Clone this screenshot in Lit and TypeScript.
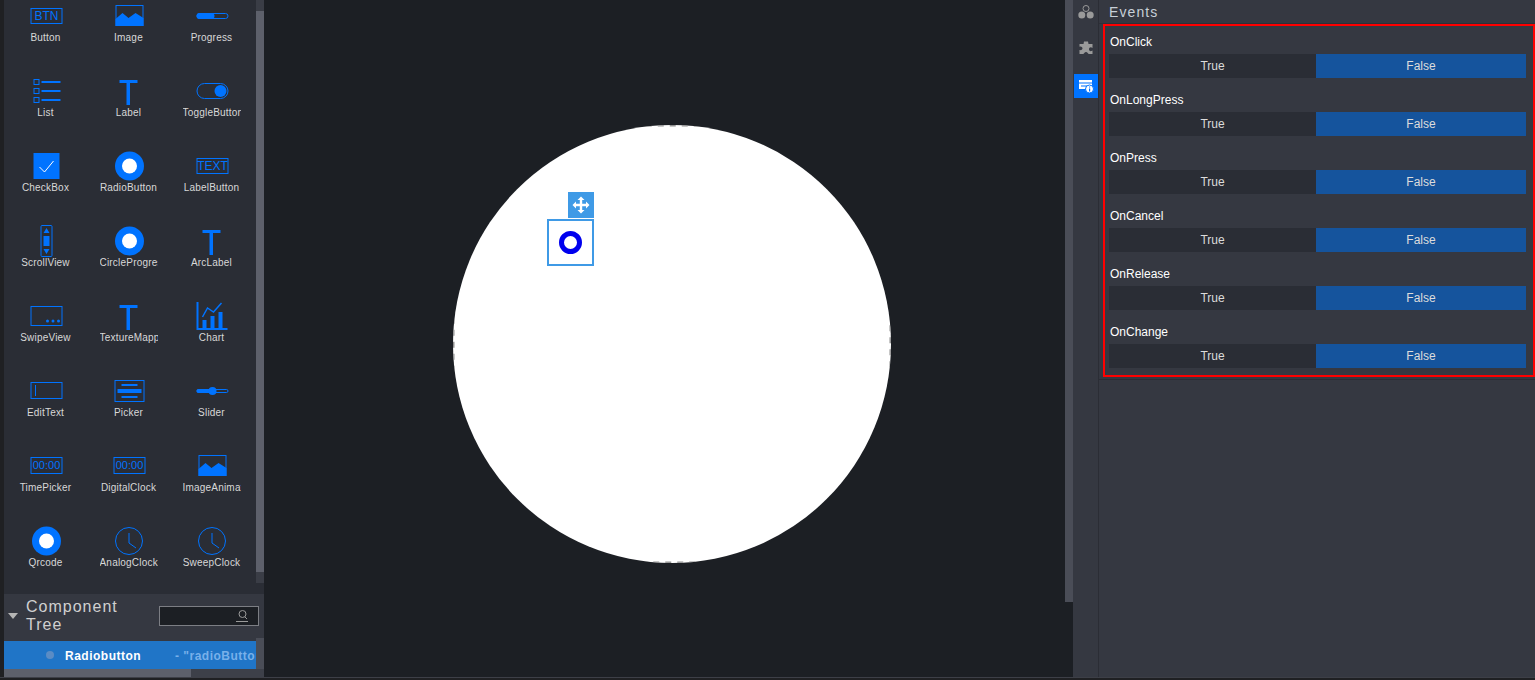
import { LitElement, html, css, svg } from "lit";
import { customElement } from "lit/decorators.js";

const B = "#0073ff";
const T = svg`<path d="M10.5 4h18v3h-7.500v22h-3.500v-22h-7z" fill=${B}/>`;
const dot = svg`<circle cx="20.500" cy="15" r="14.500" fill=${B}/><circle cx="20.500" cy="15" r="7.500" fill="#fff"/>`;
const img = svg`<rect x="7" y="4.500" width="27" height="20" fill="none" stroke=${B}/><path d="M6.500 25v-7l7-6 6 5 7-5 8 5v8z" fill=${B}/>`;
const clock = svg`<circle cx="20" cy="15" r="13.500" fill="none" stroke=${B}/><path d="M20 7v10l7 5" fill="none" stroke=${B}/>`;
const txt = (s: string, rectY: number, h: number, size: number) => svg`<rect x="5" y=${rectY + 0.5} width="31" height=${h} fill="none" stroke=${B}/><text x="20.500" y=${rectY + h / 2 + size * 0.37} text-anchor="middle" font-family="Liberation Sans" font-size=${size} fill=${B}>${s}</text>`;

const items: [string, unknown][] = [
  ["Button", txt("BTN", 7, 15, 12)],
  ["Image", img],
  ["Progress", svg`<rect x="5" y="12.500" width="31" height="5" rx="2.500" fill="none" stroke=${B}/><rect x="4.500" y="12" width="18" height="6" rx="3" fill=${B}/>`],
  ["List", svg`<g fill="none" stroke=${B}><rect x="8" y="3.500" width="5" height="5"/><rect x="8" y="12.500" width="5" height="5"/><rect x="8" y="21.500" width="5" height="5"/></g><path d="M15.500 6h19M15.500 15h19M15.500 24h19" stroke=${B} stroke-width="2"/>`],
  ["Label", T],
  ["ToggleButton", svg`<rect x="5" y="7.500" width="31" height="15" rx="7.500" fill="none" stroke=${B}/><circle cx="28.500" cy="15" r="6" fill=${B}/>`],
  ["CheckBox", svg`<rect x="7.500" y="2" width="26" height="26" fill=${B}/><path d="M13.500 16l5 5 9-11" fill="none" stroke="#fff"/>`],
  ["RadioButton", dot],
  ["LabelButton", txt("TEXT", 7, 15, 12)],
  ["ScrollView", svg`<rect x="15" y="-0.500" width="11" height="31" rx="1" fill="none" stroke=${B}/><path d="M20.500 2l3 5h-6zM17.500 10h6v10h-6zM17.500 23h6l-3 5z" fill=${B}/>`],
  ["CircleProgress", dot],
  ["ArcLabel", T],
  ["SwipeView", svg`<rect x="5" y="5.500" width="31" height="19" fill="none" stroke=${B}/><g fill=${B}><circle cx="21.500" cy="20" r="1.500"/><circle cx="27" cy="20" r="1.500"/><circle cx="32.500" cy="20" r="1.500"/></g>`],
  ["TextureMapper", T],
  ["Chart", svg`<path d="M5.500 1v27h30" fill="none" stroke=${B} stroke-width="2"/><path d="M10.500 19h4v8h-4zM18.500 15h4v12h-4zM26.500 11h4v16h-4z" fill=${B}/><path d="M10.500 16l5-9 6 4 8-9" fill="none" stroke=${B} stroke-width="1.500"/>`],
  ["EditText", svg`<rect x="5" y="6.500" width="31" height="16" fill="none" stroke=${B}/><path d="M9.500 9v11" stroke=${B}/>`],
  ["Picker", svg`<rect x="6" y="4.500" width="29" height="21" fill="none" stroke=${B}/><path d="M12.500 8h16v2h-16zM8.500 13h24v4h-24zM12.500 20h16v2h-16z" fill=${B}/>`],
  ["Slider", svg`<rect x="5" y="13.500" width="31" height="3" rx="1.500" fill="none" stroke=${B}/><rect x="4.500" y="13" width="16" height="4" rx="2" fill=${B}/><circle cx="20.500" cy="15" r="4" fill=${B}/>`],
  ["TimePicker", txt("00:00", 6, 16, 11)],
  ["DigitalClock", txt("00:00", 6, 16, 11)],
  ["ImageAnimator", img],
  ["Qrcode", dot],
  ["AnalogClock", clock],
  ["SweepClock", clock],
];

const events = ["OnClick", "OnLongPress", "OnPress", "OnCancel", "OnRelease", "OnChange"];

@customElement("app-root")
export class AppRoot extends LitElement {
  static styles = css`
    :host { display: block; width: 1535px; height: 680px; overflow: hidden; background: #1c1f24; font-family: "Liberation Sans", Arial, sans-serif; }
    .app { display: grid; grid-template-columns: 4px 260px 5px 804px 26px 436px; height: 677px; }
    .strip { background: #1f2023; }
    .spacer { background: #1c1f24; }
    .left { display: flex; flex-direction: column; min-height: 0; }
    .palette { display: flex; height: 594px; background: #2a2d35; overflow: hidden; }
    .grid { width: 252px; display: grid; grid-template-columns: repeat(3, 83px); grid-auto-rows: 75px; padding-top: 1px; align-content: start; }
    .cell { display: flex; flex-direction: column; align-items: center; }
    .cell svg { width: 40px; height: 30px; overflow: visible; display: block; }
    .name { width: 58px; height: 14px; line-height: 14px; font-size: 10px; letter-spacing: 0.2px; color: #d8d8d8; white-space: nowrap; overflow: hidden; text-align: center; }
    .vbar { width: 8px; height: 583px; background: #3a3d46; padding-top: 11px; box-sizing: border-box; }
    .vbar div { height: 561px; background: #5d606b; }
    .treehead { height: 44px; background: #353841; display: flex; align-items: center; padding-left: 4px; gap: 8px; padding-right: 5px; }
    .tri { width: 0; height: 0; border-left: 5px solid transparent; border-right: 5px solid transparent; border-top: 6px solid #b5b5b5; }
    .title { width: 110px; font-size: 16px; line-height: 18px; letter-spacing: 1px; color: #d0d0d0; }
    .search { width: 100px; height: 20px; box-sizing: border-box; border: 1px solid #7c7e84; background: #1c1f24; display: flex; justify-content: flex-end; align-items: center; padding-right: 9px; margin-left: auto; }
    .gap { height: 3px; background: #353841; }
    .tree { display: grid; grid-template-columns: 252px 8px; grid-template-rows: 28px 8px; }
    .row { background: #2075c7; display: flex; align-items: center; overflow: hidden; white-space: nowrap; font-size: 12px; font-weight: bold; letter-spacing: 0.5px; padding-left: 42px; }
    .bullet { width: 8px; height: 8px; border-radius: 50%; background: #5b8cc4; margin-right: 11px; flex: none; }
    .rname { color: #fff; width: 110px; flex: none; padding-top: 1px; }
    .rid { color: #78b0ea; padding-top: 1px; }
    .tv { background: #4a4d57; margin-top: -3px; }
    .hbar { background: #3d4049; }
    .hbar div { width: 187px; height: 8px; background: #5d606b; }
    .canvas { display: flex; min-width: 0; }
    .stage { flex: 1; position: relative; background: #1c1f24; overflow: hidden; }
    .sbar { width: 8px; height: 602px; background: #4a4d57; }
    .circle { position: absolute; left: 184px; top: 125px; width: 438px; height: 438px; border-radius: 50%; background: #fff; overflow: hidden; }
    .dash { display: block; width: 100%; height: 100%; }
    .sel { position: absolute; left: 278px; top: 219px; width: 47px; height: 47px; box-sizing: border-box; border: 2px solid #3f9ae6; display: flex; align-items: center; justify-content: center; }
    .radio { width: 23px; height: 23px; box-sizing: border-box; border-radius: 50%; border: 5.5px solid #0000ee; background: #fff; }
    .handle { position: absolute; left: 299px; top: 192px; width: 26px; height: 26px; background: #3f9ae6; display: flex; align-items: center; justify-content: center; }
    .rail { background: #353841; border-right: 1px solid #2b2d35; display: flex; flex-direction: column; align-items: center; }
    .ri { width: 24px; height: 24px; display: flex; align-items: center; justify-content: center; margin-bottom: 12px; }
    .ri.two { margin-bottom: 14px; }
    .ri.on { background: #0073ff; }
    .right { background: #353841; display: flex; flex-direction: column; }
    .rhead { height: 24px; box-sizing: border-box; line-height: 24px; padding-left: 10px; font-size: 14px; letter-spacing: 1.1px; color: #c8d0d8; border-bottom: 1px solid #2e3038; }
    .box { margin-left: 4px; height: 353px; box-sizing: border-box; border: 2px solid #f00; padding: 4px 7px 0 4px; }
    .ev { height: 58px; box-sizing: border-box; }
    .evname { height: 24px; line-height: 24px; padding-left: 1px; font-size: 12px; color: #fff; }
    .btns { display: grid; grid-template-columns: 207px 210px; height: 24px; line-height: 24px; font-size: 12px; text-align: center; color: #dcdcdc; }
    .t { background: #2a2d35; }
    .f { background: #15549d; }
    .rline { height: 1px; background: #2b2d35; margin-top: 2px; }
    .foot { height: 3px; background: #1f2023; border-top: 1px solid #3d3f47; box-sizing: border-box; }
  `;

  render() {
    return html`
      <div class="app">
        <div class="strip"></div>
        <div class="left">
          <div class="palette">
            <div class="grid">
              ${items.map(([n, icon]) => html`<div class="cell"><svg viewBox="0 0 40 30">${icon}</svg><div class="name">${n}</div></div>`)}
            </div>
            <div class="vbar"><div></div></div>
          </div>
          <div class="treehead">
            <div class="tri"></div>
            <div class="title">Component Tree</div>
            <div class="search">
              <svg width="14" height="14" viewBox="0 0 14 14" fill="none" stroke="#9a9a9a"><circle cx="7.500" cy="5" r="3.500"/><path d="M10 8l2 2M1 12.500h12"/></svg>
            </div>
          </div>
          <div class="gap"></div>
          <div class="tree">
            <div class="row"><span class="bullet"></span><span class="rname">Radiobutton</span><span class="rid">- "radioButton"</span></div>
            <div class="tv"></div>
            <div class="hbar"><div></div></div>
            <div class="hbar"></div>
          </div>
        </div>
        <div class="spacer"></div>
        <div class="canvas">
          <div class="stage">
            <div class="circle">
              <svg class="dash" viewBox="0 0 438 438"><rect x="0.750" y="0.750" width="436.500" height="436.500" fill="none" stroke="#8f8f8f" stroke-width="1.500" stroke-dasharray="6 6"/></svg>
            </div>
            <div class="handle">
              <svg width="18" height="18" viewBox="0 0 18 18" fill="#fff"><path d="M9 .5l3.500 3.500h-2.300v3.800h3.800v-2.300l3.500 3.500-3.500 3.500v-2.300h-3.800v3.800h2.300l-3.500 3.500-3.500-3.500h2.300v-3.800h-3.800v2.300l-3.500-3.500 3.500-3.500v2.300h3.800v-3.800h-2.300z"/></svg>
            </div>
            <div class="sel"><div class="radio"></div></div>
          </div>
          <div class="sbar"></div>
        </div>
        <div class="rail">
          <div class="ri">
            <svg width="16" height="16" viewBox="0 0 16 16" fill="#9a9a9a"><circle cx="8" cy="4.500" r="3" fill="none" stroke="#9a9a9a"/><circle cx="3.800" cy="11" r="3.500"/><circle cx="12.200" cy="11" r="3.500"/></svg>
          </div>
          <div class="ri two">
            <svg width="16" height="16" viewBox="0 0 16 16" fill="#9a9a9a"><path d="M6 1.500h4l.5 2.500h4v4l-1-.5c-1.500-.5-2.500 .5-2.500 1.800s1 2.200 2.500 1.700l1-.5v3.500h-3.500c-1 0-1.500-2-3-2s-2 2-3 2h-3.500v-4c2 .5 3-.5 3-1.500s-1-2.500-3-1.800v-2.700h4z"/></svg>
          </div>
          <div class="ri on">
            <svg width="16" height="16" viewBox="0 0 16 16"><path d="M1 2h13v9h-13z" fill="#fff"/><path d="M1 4.500h13v1h-13zM3 7.500h6v1h-6z" fill="#0073ff"/><circle cx="11.500" cy="11" r="4" fill="#fff" stroke="#0073ff"/><path d="M11 8.500h1.200v1h-1.200zM11 10.500h1.200v3h-1.200z" fill="#0073ff"/></svg>
          </div>
        </div>
        <div class="right">
          <div class="rhead">Events</div>
          <div class="box">
            ${events.map((e) => html`<div class="ev"><div class="evname">${e}</div><div class="btns"><div class="t">True</div><div class="f">False</div></div></div>`)}
          </div>
          <div class="rline"></div>
        </div>
      </div>
      <div class="foot"></div>
    `;
  }
}
